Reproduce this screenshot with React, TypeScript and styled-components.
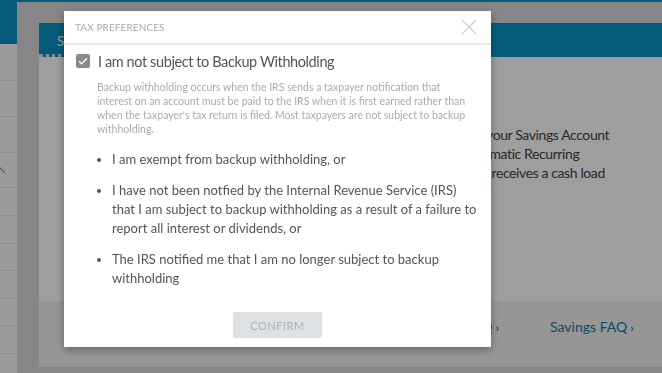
import React from "react";
import styled, { createGlobalStyle } from "styled-components";

const GlobalStyle = createGlobalStyle`
  html, body {
    margin: 0;
    padding: 0;
    width: 662px;
    height: 373px;
    overflow: hidden;
    font-family: Lato, "Open Sans", "Liberation Sans", sans-serif;
  }
`;

const Page = styled.div`
  position: relative;
  width: 662px;
  height: 373px;
  background: #d8d8d8;
  border-top: 2px solid #0693c3;
  box-sizing: border-box;
  display: flex;
  gap: 22px;
`;

const Sidebar = styled.div`
  width: 17px;
  background: #fbfbfb;
  display: flex;
  flex-direction: column;
`;

const SidebarTop = styled.div`
  height: 42px;
  background: #0693c3;
`;

const SidebarRow = styled.div<{ $h: number }>`
  height: ${p => p.$h}px;
  border-bottom: 1px solid #e6e6e6;
  box-sizing: border-box;
  position: relative;
  overflow: hidden;
`;

const Chevron = styled.span`
  position: absolute;
  left: -4px;
  top: 16px;
  width: 7px;
  height: 7px;
  border-top: 1px solid #888;
  border-right: 1px solid #888;
  transform: rotate(-45deg);
`;

const Main = styled.div`
  flex: 1;
  padding-top: 21px;
`;

const Card = styled.div`
  height: 344px;
  background: #fff;
  display: flex;
  flex-direction: column;
`;

const CardHeader = styled.div`
  height: 34px;
  background: #0693c3;
  display: flex;
  align-items: flex-end;
`;

const Tab = styled.div`
  width: 60px;
  height: 34px;
  box-sizing: border-box;
  padding: 10px 0 0 18px;
  color: #fff;
  font-size: 13px;
  border-bottom: 3px dotted #e0e0e0;
`;

const CardBody = styled.div`
  flex: 1;
  padding: 68px 0 0 422px;
  color: #444;
  font-size: 14px;
  letter-spacing: -0.4px;
  line-height: 19px;
  white-space: nowrap;
`;

const CardFooter = styled.div`
  height: 66px;
  background: #f3f3f3;
  display: flex;
  align-items: center;
  padding: 0 0 16px 426px;
  box-sizing: border-box;
  gap: 51px;
  color: #117aa0;
  font-size: 14px;
`;

const Arrow = styled.span`
  font-weight: 700;
  font-size: 12px;
  margin-left: 3px;
`;

const Overlay = styled.div`
  position: fixed;
  inset: 0;
  background: rgba(0, 0, 0, 0.38);
  padding: 11px 0 0 64px;
`;

const Modal = styled.div`
  width: 427px;
  height: 336px;
  background: #fff;
  box-shadow: 0 3px 8px rgba(0, 0, 0, 0.35);
  display: flex;
  flex-direction: column;
`;

const ModalHeader = styled.div`
  height: 35px;
  border-bottom: 2px solid #e8ebec;
  display: flex;
  align-items: center;
  justify-content: space-between;
  padding: 0 14px 0 11px;
`;

const Title = styled.div`
  color: #a9a9a9;
  font-size: 10px;
  letter-spacing: 0.1px;
  text-transform: uppercase;
`;

const Close = styled.button`
  border: 0;
  background: none;
  padding: 0;
  width: 16px;
  height: 16px;
  display: flex;
  cursor: pointer;
`;

const ModalBody = styled.div`
  flex: 1;
  padding: 8px 10px 0 12px;
`;

const CheckRow = styled.label`
  display: flex;
  align-items: center;
  gap: 8px;
  color: #555;
  font-size: 14.5px;
  letter-spacing: -0.4px;
  height: 16px;
`;

const Box = styled.span`
  width: 14px;
  height: 14px;
  background: #8a8a8a;
  border-radius: 2px;
  display: flex;
  align-items: center;
  justify-content: center;
`;

const Note = styled.p`
  margin: 11px 4px 0 21px;
  color: #ababab;
  font-size: 10.5px;
  line-height: 14px;
`;

const List = styled.ul`
  margin: 14px 0 0 0;
  padding: 0 0 0 36px;
  color: #555;
  font-size: 13px;
  line-height: 19px;
`;

const Item = styled.li`
  margin-bottom: 12px;
`;

const Footer = styled.div`
  height: 50px;
  box-sizing: border-box;
  display: flex;
  justify-content: center;
  align-items: flex-start;
  padding-top: 12px;
`;

const Confirm = styled.button`
  width: 89px;
  height: 26px;
  border: 0;
  border-radius: 2px;
  background: #dde1e3;
  color: #afb4b7;
  font-family: inherit;
  font-size: 11px;
  letter-spacing: 0.5px;
`;

const rows = [37, 36, 36, 35, 28, 28, 27, 28, 27, 28];

export default function App() {
  return (
    <>
      <GlobalStyle />
      <Page>
        <Sidebar>
          <SidebarTop />
          {rows.map((h, i) => (
            <SidebarRow key={i} $h={h}>
              {i === 3 && <Chevron />}
            </SidebarRow>
          ))}
        </Sidebar>
        <Main>
          <Card>
            <CardHeader>
              <Tab>Savings</Tab>
            </CardHeader>
            <CardBody>
              Use your Savings Account
              <br />
              Automatic Recurring
              <br />
              Card receives a cash load
            </CardBody>
            <CardFooter>
              <span>
                FAQ<Arrow>›</Arrow>
              </span>
              <span>
                Savings FAQ<Arrow>›</Arrow>
              </span>
            </CardFooter>
          </Card>
        </Main>
        <Overlay>
          <Modal>
            <ModalHeader>
              <Title>Tax Preferences</Title>
              <Close aria-label="close">
                <svg width="16" height="16" viewBox="0 0 16 16">
                  <path d="M1 1L15 15M15 1L1 15" stroke="#cfcfcf" strokeWidth="1.2" />
                </svg>
              </Close>
            </ModalHeader>
            <ModalBody>
              <CheckRow>
                <Box>
                  <svg width="10" height="8" viewBox="0 0 10 8">
                    <path d="M1 4.2L3.7 6.8L9 1.3" stroke="#fff" strokeWidth="1.3" fill="none" />
                  </svg>
                </Box>
                I am not subject to Backup Withholding
              </CheckRow>
              <Note>
                Backup withholding occurs when the IRS sends a taxpayer notification that interest on an
                account must be paid to the IRS when it is first earned rather than when the taxpayer's
                tax return is filed. Most taxpayers are not subject to backup withholding.
              </Note>
              <List>
                <Item>I am exempt from backup withholding, or</Item>
                <Item>
                  I have not been notfied by the Internal Revenue Service (IRS) that I am subject to
                  backup withholding as a result of a failure to report all interest or dividends, or
                </Item>
                <Item>The IRS notified me that I am no longer subject to backup withholding</Item>
              </List>
            </ModalBody>
            <Footer>
              <Confirm>CONFIRM</Confirm>
            </Footer>
          </Modal>
        </Overlay>
      </Page>
    </>
  );
}
